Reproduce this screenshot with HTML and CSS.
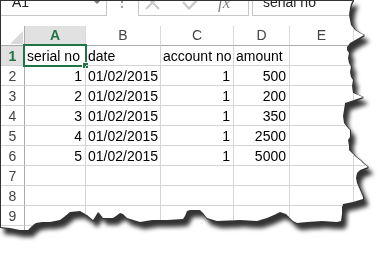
FILE: index.html
```html
<!DOCTYPE html>
<html>
<head>
    <title>Sheet</title>
    <link rel="stylesheet" href="styles.css">
</head>
<body>
    <div class="shot">
        <div class="paper">
            <div class="formula-bar">
                <div class="name-box">
                    <span class="name-text">A1</span>
                    <span class="nb-arrow"></span>
                </div>
                <div class="fb-dots"><span class="dot"></span></div>
                <div class="fb-buttons">
                    <svg class="fb-icons" width="109" height="14" viewBox="0 0 109 14">
                        <path d="M7 8 L20 -5 M20 8 L7 -5" stroke="#c9c9c9" stroke-width="2" fill="none"/>
                        <path d="M44 1 L50 7.5 L61 -4" stroke="#c9c9c9" stroke-width="2.4" fill="none"/>
                    </svg>
                    <span class="fx">fx</span>
                </div>
                <div class="fb-input"><span class="fb-text">serial no</span></div>
            </div>

            <div class="grid">
                <div class="ch corner"><span class="tri"></span></div>
                <div class="ch sel">A</div>
                <div class="ch">B</div>
                <div class="ch">C</div>
                <div class="ch">D</div>
                <div class="ch">E</div>
                <div class="ch"></div>

                <div class="rh sel">1</div>
                <div class="c active">serial no</div>
                <div class="c">date</div>
                <div class="c">account no</div>
                <div class="c">amount</div>
                <div class="c"></div>
                <div class="c"></div>

                <div class="rh">2</div>
                <div class="c num">1</div>
                <div class="c">01/02/2015</div>
                <div class="c num">1</div>
                <div class="c num">500</div>
                <div class="c"></div>
                <div class="c"></div>

                <div class="rh">3</div>
                <div class="c num">2</div>
                <div class="c">01/02/2015</div>
                <div class="c num">1</div>
                <div class="c num">200</div>
                <div class="c"></div>
                <div class="c"></div>

                <div class="rh">4</div>
                <div class="c num">3</div>
                <div class="c">01/02/2015</div>
                <div class="c num">1</div>
                <div class="c num">350</div>
                <div class="c"></div>
                <div class="c"></div>

                <div class="rh">5</div>
                <div class="c num">4</div>
                <div class="c">01/02/2015</div>
                <div class="c num">1</div>
                <div class="c num">2500</div>
                <div class="c"></div>
                <div class="c"></div>

                <div class="rh">6</div>
                <div class="c num">5</div>
                <div class="c">01/02/2015</div>
                <div class="c num">1</div>
                <div class="c num">5000</div>
                <div class="c"></div>
                <div class="c"></div>

                <div class="rh">7</div>
                <div class="c"></div><div class="c"></div><div class="c"></div>
                <div class="c"></div><div class="c"></div><div class="c"></div>

                <div class="rh">8</div>
                <div class="c"></div><div class="c"></div><div class="c"></div>
                <div class="c"></div><div class="c"></div><div class="c"></div>

                <div class="rh">9</div>
                <div class="c"></div><div class="c"></div><div class="c"></div>
                <div class="c"></div><div class="c"></div><div class="c"></div>

                <div class="rh">10</div>
                <div class="c"></div><div class="c"></div><div class="c"></div>
                <div class="c"></div><div class="c"></div><div class="c"></div>
            </div>
        </div>
    </div>
</body>
</html>
```

FILE: styles.css
```css
body {
    margin: 0;
    background-color: #fff;
    font-family: "Liberation Sans", Arial, sans-serif;
}

/* torn paper + shadow */
.shot {
    width: 389px;
    height: 253px;
    filter: drop-shadow(1px 0 0 #333)
            drop-shadow(0 1px 0 #333)
            drop-shadow(4px 6px 2px rgba(0, 0, 0, 0.8));
}

.paper {
    width: 372px;
    height: 234px;
    box-sizing: border-box;
    background-color: #fff;
    border-left: 1px solid #333;
    border-top: 1px solid #333;
    overflow: hidden;
    clip-path: polygon(
        0 0, 353px 0, 351px 4px, 350px 8px, 349px 15px, 350px 20px, 351px 25px,
        355px 30px, 360px 33px, 364px 35px, 357px 39px, 350px 43px, 347px 47px,
        347px 50px, 349px 53px, 348px 58px, 349px 63px, 351px 67px, 350px 72px,
        351px 77px, 353px 80px, 352px 86px, 353px 93px, 358px 95px, 363px 97px,
        354px 100px, 345px 103px, 344px 110px, 343px 116px, 344px 123px,
        347px 127px, 350px 130px, 350px 137px, 348px 140px, 349px 146px,
        349px 150px, 352px 153px, 356px 157px, 360px 160px, 364px 164px,
        368px 167px, 360px 170px, 357px 173px, 356px 178px, 357px 183px,
        360px 190px, 363px 197px, 363px 199px, 353px 202px, 343px 204px,
        342px 207px, 342px 214px, 341px 221px, 337px 222px, 322px 221px,
        307px 222px, 297px 223px, 293px 221px, 290px 218px, 286px 214px,
        280px 212px, 274px 215px, 267px 218px, 257px 221px, 240px 220px,
        217px 221px, 207px 218px, 203px 213px, 200px 210px, 190px 210px,
        187px 211px, 185px 216px, 183px 219px, 167px 220px, 152px 220px,
        140px 222px, 127px 218px, 123px 214px, 120px 213px, 116px 216px,
        113px 218px, 103px 218px, 100px 214px, 98px 212px, 95px 217px,
        93px 220px, 87px 215px, 80px 211px, 70px 212px, 64px 217px,
        60px 220px, 50px 222px, 42px 222px, 36px 223px, 33px 225px,
        28px 230px, 20px 230px, 10px 228px, 0 227px
    );
}

/* formula bar */
.formula-bar {
    display: flex;
    height: 15px;
    color: #222;
    font-size: 14px;
}

.name-box {
    display: flex;
    width: 105px;
    border-right: 1px solid #c6c6c6;
    border-bottom: 1px solid #c6c6c6;
}

.name-text {
    display: block;
    line-height: 14px;
    margin: -6px 0 0 11px;
}

.nb-arrow {
    margin: 0 6px 0 auto;
    width: 0;
    height: 0;
    border-left: 3px solid transparent;
    border-right: 3px solid transparent;
    border-top: 3px solid #7a7a7a;
}

.fb-dots {
    width: 31px;
    padding-left: 14px;
    box-sizing: border-box;
}

.fb-dots .dot {
    display: block;
    width: 2px;
    height: 2px;
    background-color: #9a9a9a;
    box-shadow: 0 5px 0 #9a9a9a;
}

.fb-buttons {
    display: flex;
    width: 111px;
    box-sizing: border-box;
    border-left: 1px solid #c6c6c6;
    border-right: 1px solid #c6c6c6;
    border-bottom: 1px solid #c6c6c6;
}

.fb-icons {
    display: block;
    overflow: visible;
}

.fx {
    margin-left: -30px;
    margin-top: -7px;
    font-family: "Liberation Serif", "Times New Roman", serif;
    font-style: italic;
    font-size: 17px;
    line-height: 17px;
    color: #808080;
}

.fb-input {
    flex: 1;
    margin-left: 3px;
    border-left: 1px solid #c6c6c6;
    border-bottom: 1px solid #c6c6c6;
}

.fb-text {
    display: block;
    line-height: 14px;
    margin: -6px 0 0 10px;
}

/* sheet grid */
.grid {
    display: grid;
    grid-template-columns: 24px 61px 75px 73px 56px 64px 64px;
    grid-auto-rows: 20px;
    margin-top: 10px;
    font-size: 14px;
}

.ch {
    box-sizing: border-box;
    border-right: 1px solid #dadada;
    border-bottom: 1px solid #ababab;
    text-align: center;
    line-height: 19px;
    color: #444;
}

.ch.corner {
    display: flex;
    align-items: flex-end;
    justify-content: flex-end;
    padding: 0 1px 1px 0;
    border-right-color: #ababab;
}

.tri {
    width: 0;
    height: 0;
    border-left: 13px solid transparent;
    border-bottom: 13px solid #dadada;
}

.ch.sel {
    background-color: #e1e1e1;
    border-bottom: 2px solid #217346;
    color: #217346;
    font-weight: bold;
}

.rh {
    box-sizing: border-box;
    border-right: 1px solid #ababab;
    border-bottom: 1px solid #d4d4d4;
    text-align: center;
    line-height: 20px;
    color: #444;
}

.rh.sel {
    background-color: #e1e1e1;
    color: #217346;
    font-weight: bold;
}

.c {
    position: relative;
    box-sizing: border-box;
    border-right: 1px solid #d4d4d4;
    border-bottom: 1px solid #d4d4d4;
    padding: 0 3px 0 2px;
    line-height: 20px;
    white-space: nowrap;
    color: #000;
}

.c.num {
    text-align: right;
}

/* selected cell frame and fill handle */
.c.active::before {
    content: "";
    position: absolute;
    left: -2px;
    top: -2px;
    right: -2px;
    bottom: -2px;
    border: 2px solid #217346;
}

.c.active::after {
    content: "";
    position: absolute;
    right: -4px;
    bottom: -4px;
    width: 5px;
    height: 5px;
    background-color: #217346;
    border: 1px solid #fff;
}
```
